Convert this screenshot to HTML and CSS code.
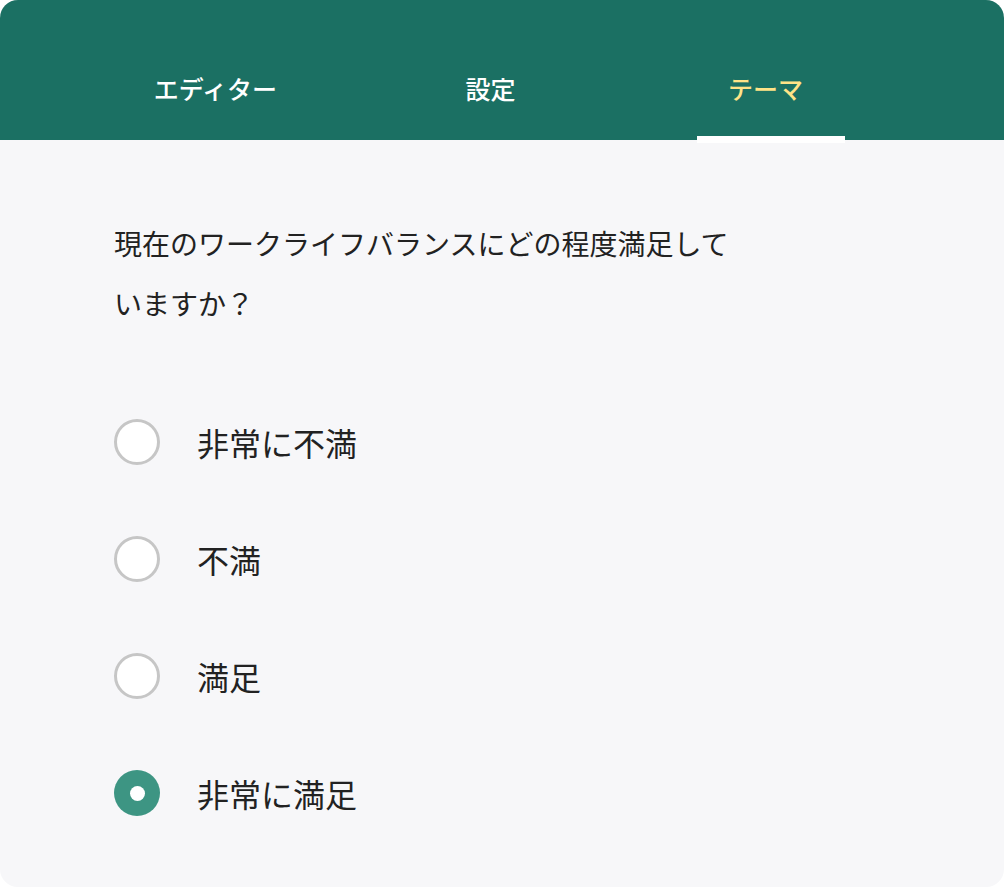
FILE: index.html
```html
<!DOCTYPE html>
<html lang="ja">
<head>
<meta charset="utf-8">
<link rel="stylesheet" href="styles.css">
</head>
<body>
<div class="card">
  <header class="tabs">
    <div class="tab">エディター</div>
    <div class="tab">設定</div>
    <div class="tab active">テーマ<span class="indicator"></span></div>
  </header>
  <main class="content">
    <p class="question">現在のワークライフバランスにどの程度満足して<br>いますか？</p>
    <div class="options">
      <label class="option"><span class="radio"></span><span class="label">非常に不満</span></label>
      <label class="option"><span class="radio"></span><span class="label">不満</span></label>
      <label class="option"><span class="radio"></span><span class="label">満足</span></label>
      <label class="option"><span class="radio checked"></span><span class="label">非常に満足</span></label>
    </div>
  </main>
</div>
</body>
</html>
```
FILE: styles.css
```css
html, body {
  margin: 0;
  padding: 0;
  background: #ffffff;
}
body {
  font-family: "Noto Sans CJK JP", "Noto Sans", sans-serif;
}
.card {
  width: 1004px;
  height: 887px;
  border-radius: 18px;
  overflow: hidden;
  background: #f7f7f9;
  display: flex;
  flex-direction: column;
}
.tabs {
  height: 140px;
  background: #1b7063;
  display: flex;
  padding-left: 78px;
  box-sizing: border-box;
  flex-shrink: 0;
}
.tab {
  position: relative;
  width: 275px;
  height: 140px;
  display: flex;
  align-items: center;
  justify-content: center;
  padding-top: 36px;
  box-sizing: border-box;
  color: #ffffff;
  font-size: 25px;
  font-weight: 500;
}
.tab.active {
  color: #ffe387;
}
.indicator {
  position: absolute;
  left: 69px;
  top: 136px;
  width: 148px;
  height: 7px;
  background: #ffffff;
}
.content {
  padding: 73px 0 0 114px;
}
.question {
  margin: 0;
  font-size: 28px;
  line-height: 60px;
  color: #222222;
  font-weight: 400;
}
.options {
  margin-top: 86px;
  display: flex;
  flex-direction: column;
  gap: 71px;
}
.option {
  display: flex;
  align-items: center;
  height: 46px;
}
.radio {
  width: 46px;
  height: 46px;
  box-sizing: border-box;
  border-radius: 50%;
  border: 3px solid #c6c6c6;
  background: #ffffff;
  flex-shrink: 0;
  position: relative;
}
.radio.checked {
  border: none;
  background: #3d9583;
}
.radio.checked::after {
  content: "";
  position: absolute;
  left: 15.5px;
  top: 15.5px;
  width: 15px;
  height: 15px;
  border-radius: 50%;
  background: #ffffff;
}
.label {
  margin-left: 37px;
  font-size: 32px;
  color: #222222;
  font-weight: 400;
}
```
